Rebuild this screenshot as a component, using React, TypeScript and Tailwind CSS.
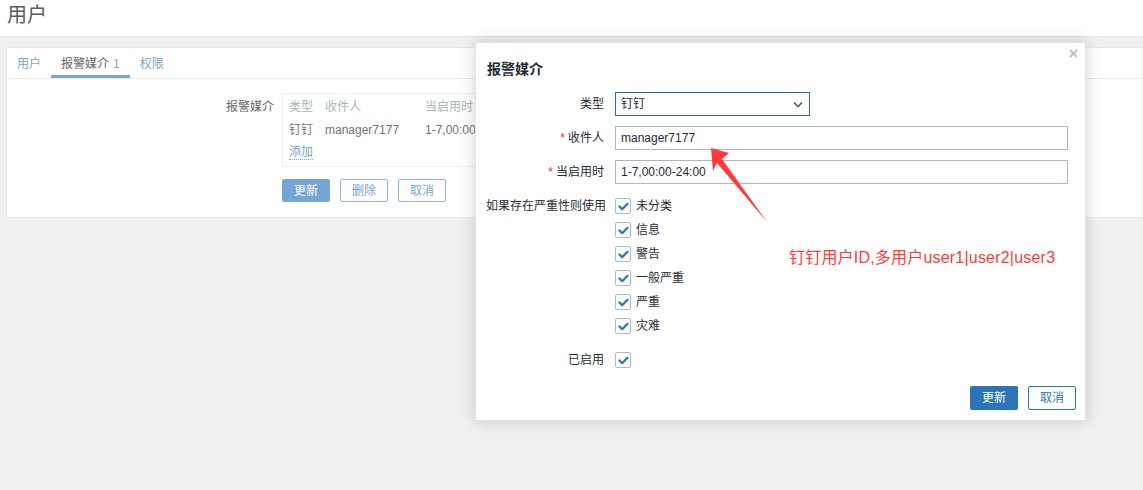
const font = { fontFamily: '"Liberation Sans", Arial, "Noto Sans CJK SC", sans-serif' }

const severities = ['未分类', '信息', '警告', '一般严重', '严重', '灾难']

function Check() {
  return (
    <span className="flex h-[16px] w-[16px] items-center justify-center rounded-[2px] border border-[#acbbc7] bg-white">
      <svg width="11" height="9" viewBox="0 0 11 9">
        <path d="M1.5 4.5 L4.2 7.2 L9.5 1.8" fill="none" stroke="#2b74b8" strokeWidth="2.2" strokeLinecap="round" strokeLinejoin="round" />
      </svg>
    </span>
  )
}

function Modal() {
  return (
    <div className="absolute left-[475px] top-[42px] flex h-[379px] w-[611px] flex-col bg-white shadow-[0_0_14px_rgba(0,0,0,0.18)] border border-[#dfe4e7]">
      <div className="relative flex h-[49px] items-center pl-[11px] pt-[3px] text-[14px] font-bold text-[#1f2c33]">
        报警媒介
        <span className="absolute right-[7px] top-[2px] text-[16px] font-bold leading-[18px] text-[#b5bfc6]">×</span>
      </div>
      <div className="flex flex-col pl-[9px] text-[12px] text-[#1f2c33]">
        <div className="flex h-[24px] items-center">
          <div className="w-[120px] pr-[1px] text-right">类型</div>
          <div className="ml-[10px] flex h-[24px] w-[195px] items-center justify-between border border-[#2b6aa6] pl-[5px] pr-[6px]">
            <span>钉钉</span>
            <svg width="10" height="7" viewBox="0 0 10 7">
              <path d="M1 1.5 L5 5.5 L9 1.5" fill="none" stroke="#3b4a55" strokeWidth="1.3" />
            </svg>
          </div>
        </div>
        <div className="mt-[10px] flex h-[24px] items-center">
          <div className="w-[120px] pr-[1px] text-right">
            <span className="mr-[3px] text-[#e33734]">*</span>收件人
          </div>
          <div className="ml-[10px] flex h-[24px] w-[453px] items-center border border-[#a9b8c4] pl-[5px]">manager7177</div>
        </div>
        <div className="mt-[10px] flex h-[24px] items-center">
          <div className="w-[120px] pr-[1px] text-right">
            <span className="mr-[3px] text-[#e33734]">*</span>当启用时
          </div>
          <div className="ml-[10px] flex h-[24px] w-[453px] items-center border border-[#a9b8c4] pl-[5px]">1-7,00:00-24:00</div>
        </div>
        <div className="mt-[10px] flex">
          <div className="w-[121px] pt-[5px] text-right leading-[14px]">如果存在严重性则使用</div>
          <div className="ml-[9px] flex flex-col">
            {severities.map((s) => (
              <div key={s} className="flex h-[24px] items-center gap-[5px]">
                <Check />
                <span>{s}</span>
              </div>
            ))}
          </div>
        </div>
        <div className="mt-[10px] flex h-[24px] items-center">
          <div className="w-[120px] pr-[1px] text-right">已启用</div>
          <div className="ml-[10px]">
            <Check />
          </div>
        </div>
      </div>
      <div className="mt-auto flex justify-end gap-[10px] pb-[10px] pr-[9px] text-[12px]">
        <button className="h-[24px] w-[48px] rounded-[2px] bg-[#2b74b8] text-white">更新</button>
        <button className="h-[24px] w-[48px] rounded-[2px] border border-[#2b74b8] bg-white text-[#2b74b8]">取消</button>
      </div>
    </div>
  )
}

export default function App() {
  return (
    <div className="relative h-[490px] w-full overflow-hidden bg-[#eef0f2]" style={font}>
      <div className="h-[37px] border-b border-[#e3e6e9] bg-white pl-[7px] text-[20px] leading-[30px] text-[#5c5c5c]">用户</div>

      <div className="ml-[6px] mt-[10px] h-[171px] border border-[#e6e9ec] bg-white text-[12px]">
        <div className="flex h-[31px] border-b border-[#ebeef0]">
          <div className="flex items-center px-[10px] pt-[1px] text-[#7f9fc3]">用户</div>
          <div className="flex items-center border-b-[3px] border-[#7aa4cf] px-[10px] pt-[4px] text-[#666]">
            报警媒介 <span className="ml-[4px] text-[#a3a3a3]">1</span>
          </div>
          <div className="flex items-center px-[10px] pt-[1px] text-[#7f9fc3]">权限</div>
        </div>

        <div className="flex pt-[14px]">
          <div className="w-[267px] pt-[5px] text-right text-[#666]">报警媒介</div>
          <div className="ml-[8px] flex flex-col">
            <div className="w-[560px] border border-[#eceff1] pb-[2px] pl-[6px] pt-[1px]">
              <div className="flex h-[23px] items-center text-[#a9b3ba]">
                <span className="w-[36px]">类型</span>
                <span className="w-[100px]">收件人</span>
                <span>当启用时</span>
              </div>
              <div className="flex h-[23px] items-center text-[#6b7378]">
                <span className="w-[36px]">钉钉</span>
                <span className="w-[100px]">manager7177</span>
                <span>1-7,00:00-24:00</span>
              </div>
              <div className="flex h-[23px] items-center">
                <span className="border-b border-dotted border-[#7aa4cf] leading-[14px] text-[#7f9fc3]">添加</span>
              </div>
            </div>
            <div className="mt-[12px] flex gap-[10px]">
              <button className="h-[23px] w-[48px] rounded-[2px] bg-[#74a6d4] text-white">更新</button>
              <button className="h-[23px] w-[48px] rounded-[2px] border border-[#8fb5da] bg-white text-[#7aa4cf]">删除</button>
              <button className="h-[23px] w-[48px] rounded-[2px] border border-[#8fb5da] bg-white text-[#7aa4cf]">取消</button>
            </div>
          </div>
        </div>
      </div>

      <Modal />

      <svg className="absolute left-0 top-0" width="1143" height="490" viewBox="0 0 1143 490">
        <polygon points="711,148 729,153 722,159 767,222 717,163 713,171" fill="#ff3b3b" />
      </svg>
      <div className="absolute left-[789px] top-[247px] text-[16px] leading-[22px] tracking-[0.2px] text-[#ff3b3b]">
        钉钉用户ID,多用户user1|user2|user3
      </div>
    </div>
  )
}
